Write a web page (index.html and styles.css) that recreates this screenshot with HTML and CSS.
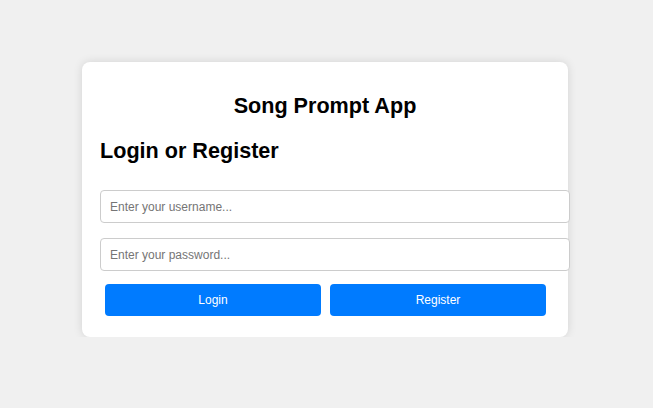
FILE: index.html
```html
<!DOCTYPE html>
<html lang="en">
<head>
<meta charset="utf-8">
<title>Song Prompt App</title>
<link rel="stylesheet" href="styles.css">
</head>
<body>
<div class="card">
  <h1 class="title">Song Prompt App</h1>
  <h2 class="subtitle">Login or Register</h2>
  <input class="field" type="text" placeholder="Enter your username...">
  <input class="field" type="password" placeholder="Enter your password...">
  <div class="actions">
    <button class="btn">Login</button>
    <button class="btn">Register</button>
  </div>
</div>
</body>
</html>
```

FILE: styles.css
```css
html, body {
  margin: 0;
  padding: 0;
  background: #f0f0f0;
  font-family: "Liberation Sans", Arial, sans-serif;
}
.card {
  width: 450px;
  padding: 18px 18px 21px;
  margin: 62px 0 0 82px;
  background: #fff;
  border-radius: 8px;
  box-shadow: 0 0 10px rgba(0, 0, 0, 0.12);
}
.title {
  margin: 13px 0 20px;
  font-size: 21.6px;
  line-height: 25px;
  font-weight: bold;
  text-align: center;
  color: #000;
}
.subtitle {
  margin: 0 0 27px;
  font-size: 21.6px;
  line-height: 25px;
  font-weight: bold;
  color: #000;
}
.field {
  display: block;
  box-sizing: content-box;
  width: 100%;
  height: 15px;
  padding: 8px 9px;
  margin: 0 0 15px;
  border: 1px solid #ccc;
  border-radius: 4px;
  font-family: "Liberation Sans", Arial, sans-serif;
  font-size: 12px;
  color: #000;
  background: #fff;
}
.field::placeholder {
  color: #757575;
}
.actions {
  display: flex;
  gap: 9px;
  padding-left: 5px;
  margin-top: -2px;
}
.btn {
  width: 216px;
  height: 32px;
  border: none;
  border-radius: 4px;
  background: #007bff;
  color: #fff;
  font-family: "Liberation Sans", Arial, sans-serif;
  font-size: 12px;
  cursor: pointer;
}
```
